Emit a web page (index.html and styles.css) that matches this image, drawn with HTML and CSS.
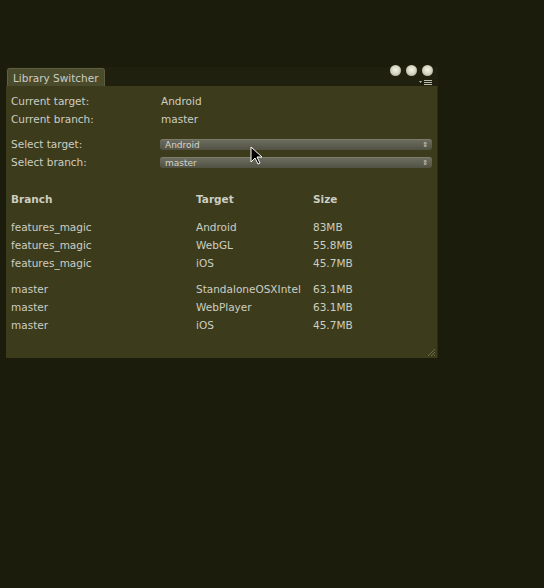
FILE: index.html
```html
<!DOCTYPE html>
<html>
<head>
<meta charset="utf-8">
<link rel="stylesheet" href="styles.css">
</head>
<body>
<div class="window">
  <div class="tabbar">
    <div class="tab">Library Switcher</div>
    <div class="controls">
      <span class="dot"></span><span class="dot"></span><span class="dot"></span>
      <svg class="menu" width="14" height="6" viewBox="0 0 14 6"><path d="M0 1h3L1.5 3z" fill="#bdbdae"/><rect x="5" y="0" width="8" height="1" fill="#bdbdae"/><rect x="5" y="2" width="8" height="1" fill="#bdbdae"/><rect x="5" y="4" width="8" height="1" fill="#bdbdae"/></svg>
    </div>
  </div>
  <div class="panel">
    <div class="info">
      <div class="row"><span class="label">Current target:</span><span>Android</span></div>
      <div class="row"><span class="label">Current branch:</span><span>master</span></div>
    </div>
    <div class="selects">
      <div class="row"><span class="label">Select target:</span><div class="dropdown"><span>Android</span><span class="arrows">⇕</span></div></div>
      <div class="row"><span class="label">Select branch:</span><div class="dropdown"><span>master</span><span class="arrows">⇕</span></div></div>
    </div>
    <div class="table">
      <div class="trow head"><span>Branch</span><span>Target</span><span>Size</span></div>
      <div class="group">
        <div class="trow"><span>features_magic</span><span>Android</span><span>83MB</span></div>
        <div class="trow"><span>features_magic</span><span>WebGL</span><span>55.8MB</span></div>
        <div class="trow"><span>features_magic</span><span>iOS</span><span>45.7MB</span></div>
      </div>
      <div class="group">
        <div class="trow"><span>master</span><span>StandaloneOSXIntel</span><span>63.1MB</span></div>
        <div class="trow"><span>master</span><span>WebPlayer</span><span>63.1MB</span></div>
        <div class="trow"><span>master</span><span>iOS</span><span>45.7MB</span></div>
      </div>
    </div>
    <svg class="grip" width="9" height="9" viewBox="0 0 9 9"><path d="M8 1L1 8M8 4L4 8M8 7L7 8" stroke="#6a6a4a" stroke-width="1"/></svg>
  </div>
</div>
<svg class="cursor" width="14" height="20" viewBox="0 0 14 20"><path d="M1 1v15l4-4 3 6 2-1-3-6h5z" fill="#000" stroke="#fff" stroke-width="1"/></svg>
</body>
</html>
```
FILE: styles.css
```css
html, body {
  margin: 0;
  padding: 0;
  background: #1c1c0d;
  width: 544px;
  height: 588px;
  overflow: hidden;
  font-family: "DejaVu Sans", sans-serif;
  font-size: 10.5px;
  color: #cdcdc2;
}
.window {
  margin: 67px 0 0 6px;
  width: 432px;
  position: relative;
}
.tabbar {
  height: 19px;
  display: flex;
  justify-content: space-between;
  align-items: flex-end;
  background: #20200f;
}
.tab {
  margin-left: 1px;
  height: 17px;
  padding: 0 5px;
  line-height: 18px;
  background: #4a4a2c;
  border: 1px solid #5f5f40;
  border-bottom: none;
  border-radius: 3px 3px 0 0;
  color: #cdcdc2;
}
.controls {
  align-self: stretch;
  display: flex;
  gap: 5px;
  padding: 0 5px 0 0;
  position: relative;
  align-items: flex-start;
  margin-top: -2px;
}
.dot {
  width: 11px;
  height: 11px;
  border-radius: 50%;
  background: radial-gradient(circle at 50% 45%, #f4f4e6 0, #d8d8c6 45%, #9a9a84 100%);
}
.menu {
  position: absolute;
  right: 5px;
  bottom: 0;
}
.panel {
  background: #3c3c1d;
  height: 272px;
  padding: 6px 0 0 5px;
  box-sizing: border-box;
  position: relative;
  border-right: 1px solid #2c2c14;
}
.row {
  display: flex;
  height: 18px;
  align-items: center;
}
.label {
  width: 150px;
  flex: none;
}
.selects {
  margin-top: 7px;
}
.dropdown {
  margin-left: -1px;
  width: 272px;
  height: 11px;
  border-radius: 3px;
  background: linear-gradient(#6c6c5e, #525244);
  border-top: 1px solid #7c7c6c;
  display: flex;
  justify-content: space-between;
  align-items: center;
  padding: 0 4px 0 5px;
  box-sizing: border-box;
  font-size: 9px;
  color: #d4d4c8;
}
.arrows {
  font-size: 7px;
}
.table {
  margin-top: 19px;
}
.trow {
  display: grid;
  grid-template-columns: 185px 117px 1fr;
  height: 18px;
  align-items: center;
}
.head {
  font-weight: bold;
}
.group {
  margin-top: 10px;
}
.group + .group {
  margin-top: 8px;
}
.grip {
  position: absolute;
  right: 1px;
  bottom: 1px;
}
.cursor {
  position: absolute;
  left: 250px;
  top: 146px;
}
```
